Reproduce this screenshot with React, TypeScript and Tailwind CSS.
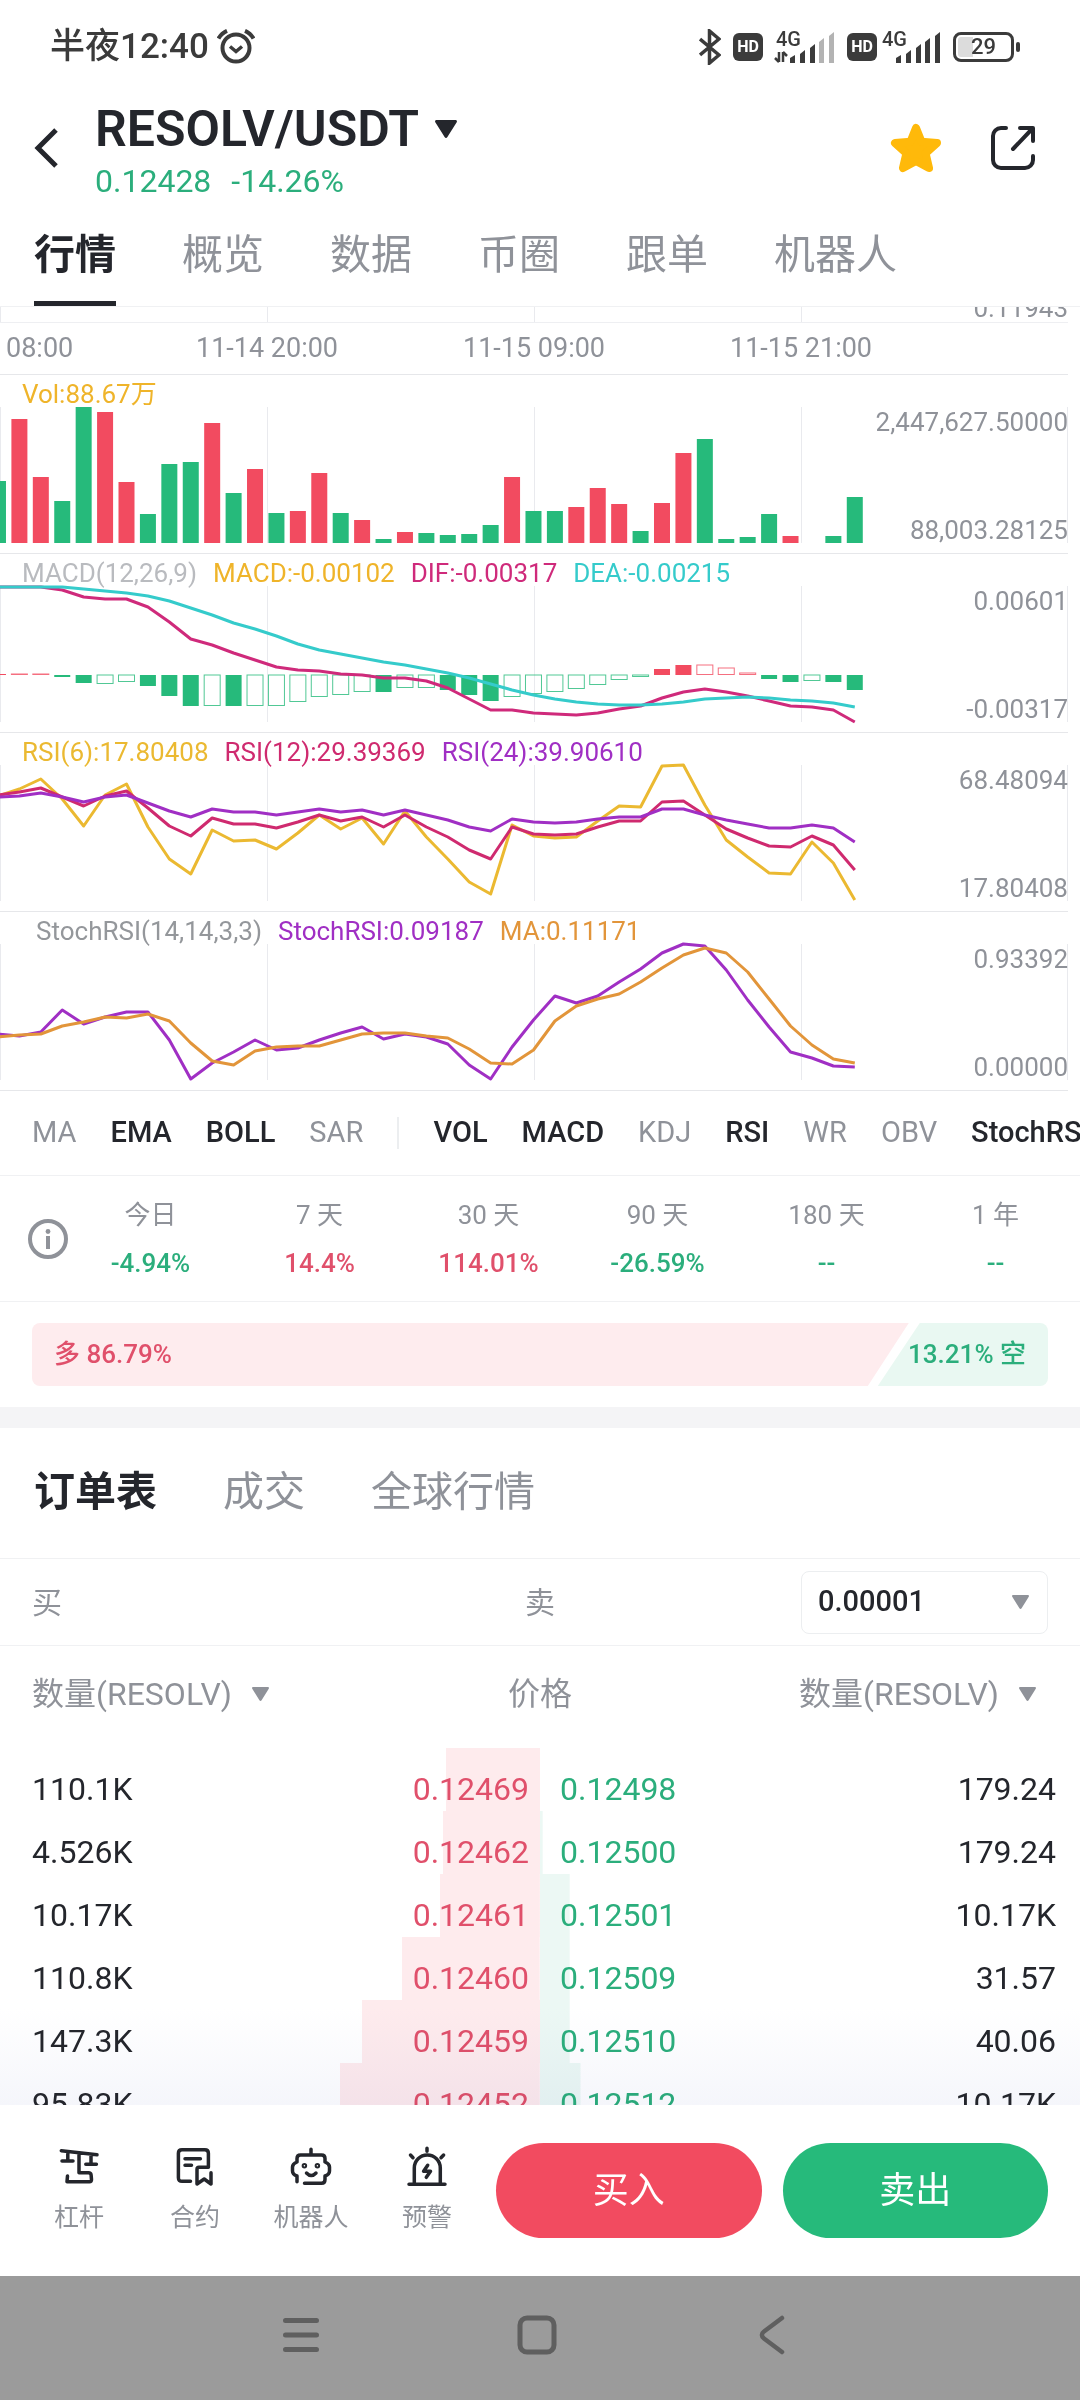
import { useState } from "react";
import clsx from "clsx";

const GREEN = "#26ba7b";
const RED = "#f24b60";

// Candle slots: slot 0 is half cut off at the left edge of the chart
const slotX = (i: number) => 19.4 + 21.42 * (i - 1);

const VOLUME: [number, "g" | "r"][] = [
  [62, "g"], [124, "r"], [66, "r"], [42, "g"], [136, "g"], [131, "r"],
  [61, "r"], [29, "g"], [79, "g"], [81, "g"], [120, "r"], [50, "g"],
  [74, "r"], [30, "g"], [32, "r"], [70, "r"], [30, "g"], [23, "r"],
  [4, "g"], [11, "r"], [10, "g"], [8, "g"], [9, "g"], [18, "g"],
  [66, "r"], [32, "g"], [32, "g"], [36, "r"], [55, "r"], [39, "r"],
  [12, "g"], [40, "r"], [90, "r"], [104, "g"], [4, "g"], [6, "g"],
  [29, "g"], [7, "r"], [0, "g"], [7, "g"], [46, "g"],
];

// Positive grows upwards (red), negative downwards (green); 1 = hollow bar
const HISTOGRAM: [number, 0 | 1][] = [
  [1, 0], [1, 1], [1, 1], [-2, 0], [-8, 0], [-9, 1], [-7, 1], [-11, 0],
  [-21, 0], [-31, 0], [-31, 1], [-31, 0], [-31, 1], [-31, 1], [-27, 1],
  [-22, 1], [-20, 1], [-17, 1], [-17, 0], [-13, 1], [-13, 1], [-15, 0],
  [-20, 0], [-26, 0], [-22, 1], [-19, 1], [-17, 1], [-14, 1], [-10, 1],
  [-5, 1], [-2, 1], [6, 0], [10, 0], [10, 1], [7, 1], [2, 1], [-4, 0],
  [-7, 0], [-6, 1], [-7, 0], [-15, 0],
];

const DIF = [
  34, 34, 34, 37, 44, 46, 46, 54, 69, 86, 92, 100, 107, 114, 117, 118, 121,
  122, 125, 125, 128, 135, 146, 157, 157, 160, 161, 162, 160, 156, 153, 145,
  139, 136, 139, 143, 148, 153, 154, 157, 169,
];
const DEA = [
  34, 34, 34, 34, 36, 38, 40, 43, 48, 55, 62, 70, 76, 83, 91, 97, 101, 105,
  109, 112, 116, 120, 125, 131, 137, 142, 146, 149, 151, 152, 152, 151, 149,
  146, 145, 144, 145, 147, 148, 150, 154,
];
const RSI6 = [
  64, 57, 47, 67, 94, 63, 52, 95, 127, 142, 98, 109, 108, 117, 101, 83, 97,
  86, 112, 79, 105, 127, 150, 162, 93, 104, 106, 105, 89, 74, 75, 34, 33, 73,
  108, 125, 141, 142, 110, 131, 168,
];
const RSI12 = [
  63, 60, 56, 65, 74, 64, 59, 76, 94, 104, 86, 92, 92, 96, 90, 83, 89, 85,
  95, 83, 95, 105, 118, 127, 95, 102, 103, 102, 95, 89, 89, 70, 69, 83, 97,
  106, 114, 115, 104, 113, 138,
];
const RSI24 = [
  65, 64, 61, 65, 70, 65, 63, 71, 79, 85, 77, 80, 80, 83, 80, 77, 80, 78, 83,
  78, 83, 88, 95, 99, 87, 90, 91, 90, 87, 85, 85, 77, 77, 83, 88, 92, 96, 96,
  93, 96, 110,
];
const STOCH = [
  123, 125, 121, 99, 113, 106, 101, 101, 129, 168, 152, 141, 129, 139, 137,
  129, 122, 116, 128, 123, 126, 133, 154, 168, 136, 109, 85, 92, 85, 71, 58,
  42, 33, 35, 59, 89, 116, 141, 147, 155, 156,
];
const STOCH_MA = [
  126, 124, 123, 115, 111, 106, 107, 103, 110, 132, 150, 154, 140, 136, 135,
  135, 129, 123, 122, 122, 125, 127, 138, 152, 153, 139, 110, 95, 88, 83, 71,
  57, 44, 37, 42, 61, 88, 115, 134, 148, 152,
];

const TABS = ["行情", "概览", "数据", "币圈", "跟单", "机器人"];
const BOOK_TABS = ["订单表", "成交", "全球行情"];

const MAIN_INDICATORS = [
  { name: "MA", on: false },
  { name: "EMA", on: true },
  { name: "BOLL", on: true },
  { name: "SAR", on: false },
];
const SUB_INDICATORS = [
  { name: "VOL", on: true },
  { name: "MACD", on: true },
  { name: "KDJ", on: false },
  { name: "RSI", on: true },
  { name: "WR", on: false },
  { name: "OBV", on: false },
  { name: "StochRSI", on: true },
];

const PERFORMANCE = [
  { label: "今日", value: "-4.94%", up: false },
  { label: "7 天", value: "14.4%", up: true },
  { label: "30 天", value: "114.01%", up: true },
  { label: "90 天", value: "-26.59%", up: false },
  { label: "180 天", value: "--", up: false },
  { label: "1 年", value: "--", up: false },
];

// Depth is the share of the price cell that the bar fills, in percent
const ORDERS = [
  { bidQty: "110.1K", bid: "0.12469", bidDepth: 35, ask: "0.12498", askQty: "179.24", askDepth: 0 },
  { bidQty: "4.526K", bid: "0.12462", bidDepth: 36, ask: "0.12500", askQty: "179.24", askDepth: 1 },
  { bidQty: "10.17K", bid: "0.12461", bidDepth: 37, ask: "0.12501", askQty: "10.17K", askDepth: 11 },
  { bidQty: "110.8K", bid: "0.12460", bidDepth: 51, ask: "0.12509", askQty: "31.57", askDepth: 11 },
  { bidQty: "147.3K", bid: "0.12459", bidDepth: 66, ask: "0.12510", askQty: "40.06", askDepth: 11 },
  { bidQty: "95.83K", bid: "0.12452", bidDepth: 74, ask: "0.12512", askQty: "10.17K", askDepth: 15 },
];

function Caret({ className }: { className?: string }) {
  return (
    <svg viewBox="0 0 22 18" className={className} fill="currentColor">
      <path d="M1.5 0h19c1.2 0 1.8 1.2 1.2 2.2L12.4 17c-.7 1.2-2.1 1.2-2.8 0L.3 2.2C-.3 1.2.3 0 1.5 0z" />
    </svg>
  );
}

function Signal({ level, data }: { level: number; data?: boolean }) {
  const bars = [
    "M15 33v-5l5-3v8z",
    "M25 33V24l5-4v13z",
    "M35 33V18l5-4v19z",
    "M44 33V12l5-4v25z",
    "M54 33V6l5-4v31z",
  ];
  return (
    <svg viewBox="0 0 60 34" className="h-[34px] w-[60px] overflow-visible">
      <text x="1" y="16" fontSize="20" fontWeight="500" fill="#3b3b3b" fontFamily="Roboto">
        4G
      </text>
      {data && (
        <path d="M4 22v10M0 28l4 4M8 32V22M12 26l-4-4" stroke="#3b3b3b" strokeWidth="2.5" fill="none" />
      )}
      {bars.map((d, i) => (
        <path key={d} d={d} fill={i < level ? "#3b3b3b" : "#b3b3b3"} />
      ))}
    </svg>
  );
}

function HdBadge() {
  return (
    <span className="flex h-7 w-[30px] items-center justify-center rounded-md bg-[#3b3b3b] text-base font-bold text-white">
      HD
    </span>
  );
}

function StatusBar() {
  return (
    <div className="flex h-[94px] shrink-0 items-center justify-between pr-[60px] pl-[50px] text-[#3b3b3b]">
      <div className="flex items-center gap-2 text-[35px] font-medium">
        <span>半夜12:40</span>
        <svg viewBox="0 0 38 36" className="h-9 w-[38px]" fill="none" stroke="currentColor" strokeWidth="4">
          <circle cx="19" cy="19" r="13.5" />
          <path d="M13 17.5l6 5 6-5" strokeWidth="3.5" />
          <path d="M1.5 9.5C3.5 6 6 3.5 10 1.8M36.5 9.5C34.5 6 32 3.5 28 1.8" />
        </svg>
      </div>
      <div className="flex items-center gap-3">
        <svg viewBox="0 0 22 36" className="h-9 w-[22px]" fill="none" stroke="currentColor" strokeWidth="3.5">
          <path d="M1 10l19 16-9.5 8V2L20 10 1 26" />
        </svg>
        <HdBadge />
        <Signal level={3} data />
        <HdBadge />
        <div className="-ml-2">
          <Signal level={5} />
        </div>
        <div className="flex items-center gap-0.5">
          <span className="flex h-[30px] w-[61px] items-center justify-center rounded-lg border-3 border-[#3b3b3b] bg-[linear-gradient(90deg,#dcdcdc_30%,transparent_30%)] bg-clip-content p-0.5 text-[22px] leading-none font-medium">
            29
          </span>
          <span className="h-2.5 w-1 rounded-sm bg-[#3b3b3b]" />
        </div>
      </div>
    </div>
  );
}

function PairHeader() {
  return (
    <header className="flex h-[108px] shrink-0 items-center pr-[44px] pl-[34px] text-[#24262c]">
      <button aria-label="返回" className="w-[61px]">
        <svg viewBox="0 0 24 40" className="h-10 w-6" fill="none" stroke="currentColor" strokeWidth="5">
          <path d="M22 2L4 20l18 18" />
        </svg>
      </button>
      <div className="flex-1 pt-1.5">
        <button className="flex items-center gap-4 text-[50px] leading-[60px] font-semibold">
          <h1>RESOLV/USDT</h1>
          <Caret className="h-[18px] w-[22px]" />
        </button>
        <p className="flex gap-5 text-[32px] leading-[44px] text-[#2bae7c]">
          <span>0.12428</span>
          <span>-14.26%</span>
        </p>
      </div>
      <div className="flex items-center gap-12">
        <button aria-label="收藏">
          <svg viewBox="0 0 52 50" className="h-[50px] w-[52px]" fill="#ffb90a" stroke="#ffb90a" strokeWidth="8" strokeLinejoin="round">
            <path d="M26 5l5.500 13.800L47 20 35.600 30.400 39 45 26 38 13 45l3.400-14.600L5 20l15.500-1.200z" />
          </svg>
        </button>
        <button aria-label="分享">
          <svg viewBox="0 0 46 46" className="h-[46px] w-[46px]" fill="none" stroke="currentColor" strokeWidth="4" strokeLinecap="round" strokeLinejoin="round">
            <path d="M16 3h-5a8 8 0 0 0-8 8v24a8 8 0 0 0 8 8h24a8 8 0 0 0 8-8v-4" />
            <path d="M30 3h13v13M42 4L23 24" />
          </svg>
        </button>
      </div>
    </header>
  );
}

type Legend = { text: string; color: string };

function Panel({
  legend,
  high,
  low,
  indent,
  children,
}: {
  legend: Legend[];
  high: string;
  low: string;
  indent?: boolean;
  children: React.ReactNode;
}) {
  return (
    <div className="mr-3 grid h-[179px] border-b border-[#e6e7ea] *:[grid-area:1/1]">
      <svg viewBox="0 1 1068 178" preserveAspectRatio="none" className="h-full w-full" fill="none">
        <path d="M.5 33V169M267.5 33V169M534.5 33V169M801.5 33V169M1067.5 33V169" stroke="#e9eaee" />
        {children}
      </svg>
      <div
        className={clsx(
          "flex gap-4 pt-1.5 leading-[27px] whitespace-nowrap",
          indent ? "pl-9" : "pl-[22px]"
        )}
      >
        {legend.map((item) => (
          <span key={item.text} style={{ color: item.color }}>
            {item.text}
          </span>
        ))}
      </div>
      <div className="flex flex-col justify-between pt-[34px] pb-[9px] text-right leading-[27px]">
        <span>{high}</span>
        <span>{low}</span>
      </div>
    </div>
  );
}

function Line({ data, color }: { data: number[]; color: string }) {
  return (
    <polyline
      points={data.map((y, i) => `${slotX(i)},${y}`).join(" ")}
      stroke={color}
      strokeWidth="3"
      strokeLinejoin="round"
    />
  );
}

function Charts() {
  return (
    <section className="text-[26px] text-[#8f9299]">
      {/* Tail of the candle chart, scrolled under the tabs */}
      <div className="mr-3 flex h-4 items-end overflow-hidden border-b border-[#eeeff2]">
        <div className="flex h-full flex-1 items-end justify-end bg-[linear-gradient(90deg,#e9eaee_1px,transparent_1px)] bg-[length:25%_100%] leading-[27px]">
          0.11943
        </div>
      </div>
      <div className="mr-3 grid h-[52px] grid-cols-[1fr_2fr_2fr_2fr_1fr] items-center border-b border-[#e6e7ea] text-center text-[27px]">
        <span className="pl-1.5 text-left">08:00</span>
        <span>11-14 20:00</span>
        <span>11-15 09:00</span>
        <span>11-15 21:00</span>
      </div>

      <Panel
        legend={[{ text: "Vol:88.67万", color: "#efb42a" }]}
        high="2,447,627.50000"
        low="88,003.28125"
      >
        {VOLUME.map(([h, side], i) => (
          <rect
            key={i}
            x={slotX(i) - 8}
            y={169 - h}
            width="16"
            height={h}
            fill={side === "g" ? GREEN : RED}
          />
        ))}
      </Panel>

      <Panel
        legend={[
          { text: "MACD(12,26,9)", color: "#b9bbbf" },
          { text: "MACD:-0.00102", color: "#efb42a" },
          { text: "DIF:-0.00317", color: "#cf2a7b" },
          { text: "DEA:-0.00215", color: "#35cbcb" },
        ]}
        high="0.00601"
        low="-0.00317"
      >
        {HISTOGRAM.map(([v, hollow], i) => {
          const color = v > 0 ? RED : GREEN;
          const top = v > 0 ? 122 - v : 122;
          return hollow ? (
            <rect
              key={i}
              x={slotX(i) - 8}
              y={top}
              width="16"
              height={Math.abs(v) - 0.5}
              stroke={color}
              strokeOpacity="0.8"
            />
          ) : (
            <rect
              key={i}
              x={slotX(i) - 8}
              y={top}
              width="16"
              height={Math.abs(v)}
              fill={color}
            />
          );
        })}
        <Line data={DIF} color="#cf2a7b" />
        <Line data={DEA} color="#35cbcb" />
      </Panel>

      <Panel
        legend={[
          { text: "RSI(6):17.80408", color: "#ebb931" },
          { text: "RSI(12):29.39369", color: "#cf2a6f" },
          { text: "RSI(24):39.90610", color: "#a02fc4" },
        ]}
        high="68.48094"
        low="17.80408"
      >
        <Line data={RSI6} color="#ebb931" />
        <Line data={RSI12} color="#cf2a6f" />
        <Line data={RSI24} color="#a02fc4" />
      </Panel>

      <Panel
        indent
        legend={[
          { text: "StochRSI(14,14,3,3)", color: "#94979b" },
          { text: "StochRSI:0.09187", color: "#a02fc4" },
          { text: "MA:0.11171", color: "#e2953a" },
        ]}
        high="0.93392"
        low="0.00000"
      >
        <Line data={STOCH} color="#a02fc4" />
        <Line data={STOCH_MA} color="#e2953a" />
      </Panel>
    </section>
  );
}

function IndicatorButton({ name, on }: { name: string; on: boolean }) {
  return (
    <button className={on ? "font-medium text-[#24262c]" : "text-[#8f9299]"}>
      {name}
    </button>
  );
}

function Indicators() {
  return (
    <div className="flex h-[85px] items-center gap-[34px] overflow-hidden border-b border-[#f0f1f3] pl-8 text-[29px] whitespace-nowrap">
      {MAIN_INDICATORS.map((item) => (
        <IndicatorButton key={item.name} {...item} />
      ))}
      <span className="h-8 w-0.5 shrink-0 bg-[#eceef0]" />
      {SUB_INDICATORS.map((item) => (
        <IndicatorButton key={item.name} {...item} />
      ))}
    </div>
  );
}

function Performance() {
  return (
    <div className="flex h-[126px] items-center border-b border-[#f0f1f3] text-[26px]">
      <button aria-label="说明" className="w-[66px] pl-7 text-[#8f9299]">
        <svg viewBox="0 0 40 40" className="h-10 w-10" fill="none" stroke="currentColor" strokeWidth="4">
          <circle cx="20" cy="20" r="18" />
          <path d="M20 17v13" />
          <circle cx="20" cy="12.5" r="2.4" fill="currentColor" stroke="none" />
        </svg>
      </button>
      <dl className="grid flex-1 grid-cols-6 text-center">
        {PERFORMANCE.map((item) => (
          <div key={item.label} className="flex flex-col gap-2 leading-10">
            <dt className="text-[#8f9299]">{item.label}</dt>
            <dd className={clsx("font-medium", item.up ? "text-[#e0506b]" : "text-[#2bae7c]")}>
              {item.value}
            </dd>
          </div>
        ))}
      </dl>
    </div>
  );
}

function LongShortRatio() {
  return (
    <div className="border-b-[21px] border-[#f4f4f6] px-8 pt-[21px] pb-[21px]">
      <div className="flex h-[63px] items-center overflow-hidden rounded-lg text-[26px] font-medium">
        <div
          className="flex h-full items-center bg-[#feecee] pl-[22px] text-[#e0506b] [clip-path:polygon(0_0,calc(100%-5px)_0,calc(100%-46px)_100%,0_100%)]"
          style={{ width: "86.79%" }}
        >
          多 86.79%
        </div>
        <div className="-ml-9 flex h-full flex-1 items-center justify-end bg-[#e9f8f2] pr-[22px] text-[#2bae7c] [clip-path:polygon(42px_0,100%_0,100%_100%,0_100%)]">
          13.21% 空
        </div>
      </div>
    </div>
  );
}

function OrderBook() {
  const [tab, setTab] = useState("订单表");

  return (
    <section className="text-[30px] text-[#8f9299]">
      <nav className="flex h-[131px] items-center gap-[66px] border-b border-[#f0f1f3] pl-[34px] text-[41px]">
        {BOOK_TABS.map((name) => (
          <button
            key={name}
            onClick={() => setTab(name)}
            className={tab === name ? "font-bold text-[#24262c]" : ""}
          >
            {name}
          </button>
        ))}
      </nav>

      <div className="grid h-[87px] grid-cols-[1fr_auto_1fr] items-center border-b border-[#f0f1f3] px-8">
        <span>买</span>
        <span>卖</span>
        <div className="grid w-[247px] items-center justify-self-end *:[grid-area:1/1]">
          <select
            aria-label="价格精度"
            className="h-[63px] appearance-none rounded-lg border border-[#eceef0] pl-4 text-[29px] font-medium text-[#24262c]"
          >
            <option>0.00001</option>
          </select>
          <Caret className="pointer-events-none mr-[19px] h-3.5 w-[17px] justify-self-end" />
        </div>
      </div>

      <table className="w-full table-fixed">
        <thead className="text-[32px]">
          <tr className="h-[102px] *:p-0 *:pb-1.5 *:font-normal">
            <th>
              <button className="flex items-center gap-5 pl-8 whitespace-nowrap">
                数量(RESOLV)
                <Caret className="h-3.5 w-[17px]" />
              </button>
            </th>
            <th colSpan={2}>价格</th>
            <th>
              <button className="float-right flex items-center gap-5 pr-11 whitespace-nowrap">
                数量(RESOLV)
                <Caret className="h-3.5 w-[17px]" />
              </button>
            </th>
          </tr>
        </thead>
        <tbody className="text-[32px] leading-[43px] text-[#24262c]">
          {ORDERS.map((row) => (
            <tr key={row.bid} className="*:pt-5">
              <td className="pl-8">{row.bidQty}</td>
              <td
                className="bg-[linear-gradient(#feebed,#feebed)] bg-right bg-no-repeat pr-[11px] text-right text-[#e0506b]"
                style={{ backgroundSize: `${row.bidDepth}% 100%` }}
              >
                {row.bid}
              </td>
              <td
                className="bg-[linear-gradient(#ecf8f4,#ecf8f4)] bg-left bg-no-repeat pl-5 text-[#2bae7c]"
                style={{ backgroundSize: `${row.askDepth}% 100%` }}
              >
                {row.ask}
              </td>
              <td className="pr-6 text-right">{row.askQty}</td>
            </tr>
          ))}
        </tbody>
      </table>
    </section>
  );
}

function ActionBar() {
  const actions = [
    {
      label: "杠杆",
      icon: (
        <path d="M4.3 5.7L40 9.700M10.800 6.500V16M5 16h11M34 9.500v9.800M28.800 19.300h10.600M22 8v19.700h9.500c1.800 0 2.400.6 2.600 2.200l.4 4.600c.1 1.500-.7 2.200-2 2.200H10l.5-5.700" />
      ),
    },
    {
      label: "合约",
      icon: (
        <path d="M17.500 36.300H9c-2.400 0-3.600-1.200-3.600-3.600V8.300c0-2.400 1.200-3.600 3.600-3.600h22.800c2.400 0 3.600 1.200 3.600 3.600v14H26c-1.300 0-2 .7-2 2V39l7.200-5 6.800 5V27.700M12 13.700h15.400M12 20.300h6.500" />
      ),
    },
    {
      label: "机器人",
      icon: (
        <>
          <path d="M22 4.300V9M8 36.700V31c-2.500-.8-4.500-2.500-4.500-5v-4c0-2.200 2-4 4.500-5v-3.500C8 11 9.200 10 11.500 10h21c2.300 0 3.500 1 3.500 3.500V17c2.500 1 4.500 2.800 4.500 5v4c0 2.500-2 4.200-4.500 5v3.500c0 2.500-1.200 3.800-3.500 3.800h-17M17.500 28c3 3.300 6.500 3.300 9.500 0" />
          <circle cx="15.4" cy="20.7" r="1" />
          <circle cx="28.4" cy="20.7" r="1" />
        </>
      ),
    },
    {
      label: "预警",
      icon: (
        <path d="M4 39.300h36M9.300 39V23a13 13 0 0 1 26 0v16M22 3.300v3M5.500 10l2.500 2.700M38.600 10l-2.600 2.700M22.700 20.300l-4.100 6h6.900l-4.200 6" />
      ),
    },
  ];

  return (
    <div className="flex h-[171px] shrink-0 items-center gap-[11px] bg-white pr-8 pl-[21px]">
      <div className="grid w-[464px] grid-cols-4">
        {actions.map((action) => (
          <button key={action.label} className="flex flex-col items-center gap-2.5 text-[25px] leading-[38px] text-[#8f9299]">
            <svg viewBox="0 0 44 44" className="h-11 w-11 text-[#24262c]" fill="none" stroke="currentColor" strokeWidth="3.5" strokeLinecap="round" strokeLinejoin="round">
              {action.icon}
            </svg>
            {action.label}
          </button>
        ))}
      </div>
      <div className="grid flex-1 grid-cols-2 gap-[21px] text-4xl text-white">
        <button className="h-[95px] rounded-full bg-[#f24b60]">买入</button>
        <button className="h-[95px] rounded-full bg-[#26ba7b]">卖出</button>
      </div>
    </div>
  );
}

function SystemNav() {
  return (
    <div className="flex h-[124px] shrink-0 items-center justify-center bg-[#9b9b9b] pr-1.5 pb-1.5 text-[#5f5f5f] *:flex *:w-[236px] *:justify-center">
      <button aria-label="最近任务">
        <svg viewBox="0 0 40 40" className="h-10 w-10" stroke="currentColor" strokeWidth="5" strokeLinecap="round">
          <path d="M4.5 5.5h31M4.5 20h31M4.5 34.5h31" />
        </svg>
      </button>
      <button aria-label="主屏幕">
        <svg viewBox="0 0 40 40" className="h-10 w-10" fill="none" stroke="currentColor" strokeWidth="5">
          <rect x="3" y="3" width="34" height="34" rx="7" />
        </svg>
      </button>
      <button aria-label="返回">
        <svg viewBox="0 0 40 40" className="h-10 w-10" fill="none" stroke="currentColor" strokeWidth="4.5" strokeLinecap="round">
          <path d="M29 3L11 16.5c-2.800 2-2.800 5 0 7L29 37" />
        </svg>
      </button>
    </div>
  );
}

export default function App() {
  const [tab, setTab] = useState("行情");

  return (
    <div className="flex h-screen flex-col overflow-hidden bg-white font-[Roboto,'Noto_Sans_CJK_SC',sans-serif]">
      <StatusBar />
      <PairHeader />
      <nav className="flex h-[105px] shrink-0 gap-[66px] border-b border-[#f0f1f3] pl-[34px] text-[41px]">
        {TABS.map((name) => (
          <button
            key={name}
            onClick={() => setTab(name)}
            className={clsx(
              "h-[104px] border-b-[5px] pt-2",
              tab === name
                ? "border-[#24262c] font-bold text-[#24262c]"
                : "border-transparent text-[#8f9299]"
            )}
          >
            {name}
          </button>
        ))}
      </nav>

      <main className="relative min-h-0 flex-1 overflow-hidden">
        <Charts />
        <Indicators />
        <Performance />
        <LongShortRatio />
        <OrderBook />
        <div className="pointer-events-none absolute inset-x-0 bottom-0 h-24 bg-linear-to-b from-white to-[#f5f6fb] mix-blend-multiply" />
      </main>

      <ActionBar />
      <SystemNav />
    </div>
  );
}
